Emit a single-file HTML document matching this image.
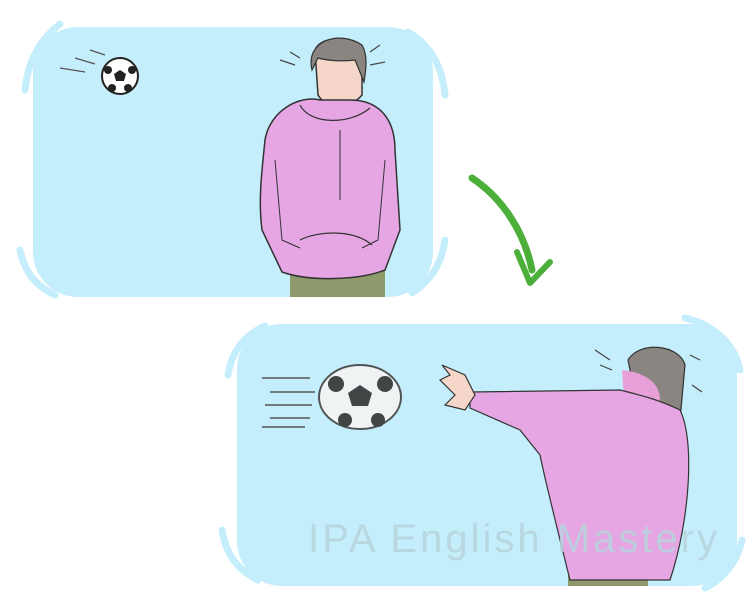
<!DOCTYPE html>
<html><head><style>
html,body{margin:0;padding:0;background:#fff;width:750px;height:600px;overflow:hidden}
</style></head><body>
<svg width="750" height="600" viewBox="0 0 750 600" xmlns="http://www.w3.org/2000/svg">
<path d="M60 24 C40 40 28 60 25 90" stroke="#c4eefb" stroke-width="7" fill="none" stroke-linecap="round"/>
<path d="M20 250 C24 270 34 285 55 295" stroke="#c4eefb" stroke-width="7" fill="none" stroke-linecap="round"/>
<path d="M408 32 C430 45 442 65 445 95" stroke="#c4eefb" stroke-width="7" fill="none" stroke-linecap="round"/>
<path d="M445 240 C442 262 432 280 412 293" stroke="#c4eefb" stroke-width="7" fill="none" stroke-linecap="round"/>
<rect x="33" y="27" width="400" height="270" rx="45" fill="#c4eefb"/>
<path d="M265 326 C245 335 232 350 228 375" stroke="#c4eefb" stroke-width="7" fill="none" stroke-linecap="round"/>
<path d="M222 530 C226 555 238 570 258 580" stroke="#c4eefb" stroke-width="7" fill="none" stroke-linecap="round"/>
<path d="M685 318 C715 325 735 345 740 370" stroke="#c4eefb" stroke-width="7" fill="none" stroke-linecap="round"/>
<path d="M742 540 C738 560 725 578 705 588" stroke="#c4eefb" stroke-width="7" fill="none" stroke-linecap="round"/>
<rect x="237" y="324" width="500" height="262" rx="45" fill="#c4eefb"/>

<circle cx="120" cy="76" r="18" fill="#fff" stroke="#222" stroke-width="2"/>
<polygon points="120,70 126,74 124,81 116,81 114,74" fill="#222"/>
<circle cx="108" cy="70" r="4" fill="#222"/><circle cx="132" cy="70" r="4" fill="#222"/><circle cx="112" cy="88" r="4" fill="#222"/><circle cx="128" cy="88" r="4" fill="#222"/>
<path d="M60 68 L85 72 M75 58 L95 64 M90 50 L105 55" stroke="#555" stroke-width="1.2"/>

<rect x="290" y="270" width="95" height="27" fill="#8c9a6c"/>
<path d="M315 50 C320 35 355 35 362 55 L362 95 C350 110 325 108 318 95 Z" fill="#f5d6c8" stroke="#333" stroke-width="1.5"/>
<path d="M312 70 C305 40 340 30 362 45 C368 55 366 70 364 82 L355 60 C340 62 325 60 318 58 Z" fill="#8a8580" stroke="#333" stroke-width="1.2"/>
<path d="M265 140 C270 110 300 95 320 100 L350 100 C380 100 395 120 395 150 L400 230 L385 270 C360 280 310 282 282 272 L262 230 C258 200 262 170 265 140Z" fill="#e5a6e3" stroke="#333" stroke-width="1.5"/>
<path d="M300 105 C310 125 350 125 370 108" stroke="#333" stroke-width="1.2" fill="none"/>
<path d="M300 240 C320 230 355 230 372 245" stroke="#333" stroke-width="1.2" fill="none"/>
<path d="M275 160 L282 240 L300 248 M385 160 L378 240 L362 248 M340 130 L340 200" stroke="#333" stroke-width="1" fill="none"/>
<path d="M280 60 L295 65 M290 52 L300 58 M370 52 L380 45 M370 65 L385 62" stroke="#444" stroke-width="1.2"/>

<path d="M472 178 C505 200 525 235 532 270" stroke="#4caf3a" stroke-width="7" fill="none" stroke-linecap="round"/>
<path d="M517 252 L530 283 L550 262" stroke="#4caf3a" stroke-width="6" fill="none" stroke-linecap="round" stroke-linejoin="round"/>

<g opacity="0.9">
<ellipse cx="360" cy="397" rx="41" ry="32" fill="#f4f4f4" stroke="#444" stroke-width="2"/>
<polygon points="360,385 372,393 368,406 352,406 348,393" fill="#333"/>
<circle cx="336" cy="384" r="8" fill="#333"/><circle cx="385" cy="384" r="8" fill="#333"/><circle cx="345" cy="420" r="7" fill="#333"/><circle cx="378" cy="420" r="7" fill="#333"/>
</g>
<path d="M262 378 L310 378 M270 392 L315 392 M265 405 L312 405 M270 418 L310 418 M262 427 L305 427" stroke="#555" stroke-width="1.5"/>

<rect x="568" y="565" width="80" height="21" fill="#8c9a6c"/>
<path d="M628 360 C640 340 680 345 685 365 L680 420 L640 420 Z" fill="#8a8580" stroke="#333" stroke-width="1.2"/>
<path d="M622 370 C640 372 660 380 660 400 L655 430 L625 410 Z" fill="#e8a0d8"/>
<path d="M470 392 L620 390 C640 395 660 400 680 410 C695 440 690 520 670 580 L570 580 C560 540 545 480 540 455 L520 430 L470 408 Z" fill="#e5a6e3" stroke="#333" stroke-width="1.2"/>
<path d="M442 365 L450 375 L440 380 L455 395 L445 405 L465 410 L475 395 L465 375 Z" fill="#f5d6c8" stroke="#333" stroke-width="1.2"/>
<path d="M595 350 L610 360 M600 365 L612 370 M690 355 L700 360 M692 385 L702 392" stroke="#444" stroke-width="1.2"/>

<text x="308" y="552" font-family="Liberation Sans, sans-serif" font-size="40" fill="#b8d4dc" opacity="0.85" letter-spacing="3">IPA English Mastery</text>
</svg>
</body></html>
